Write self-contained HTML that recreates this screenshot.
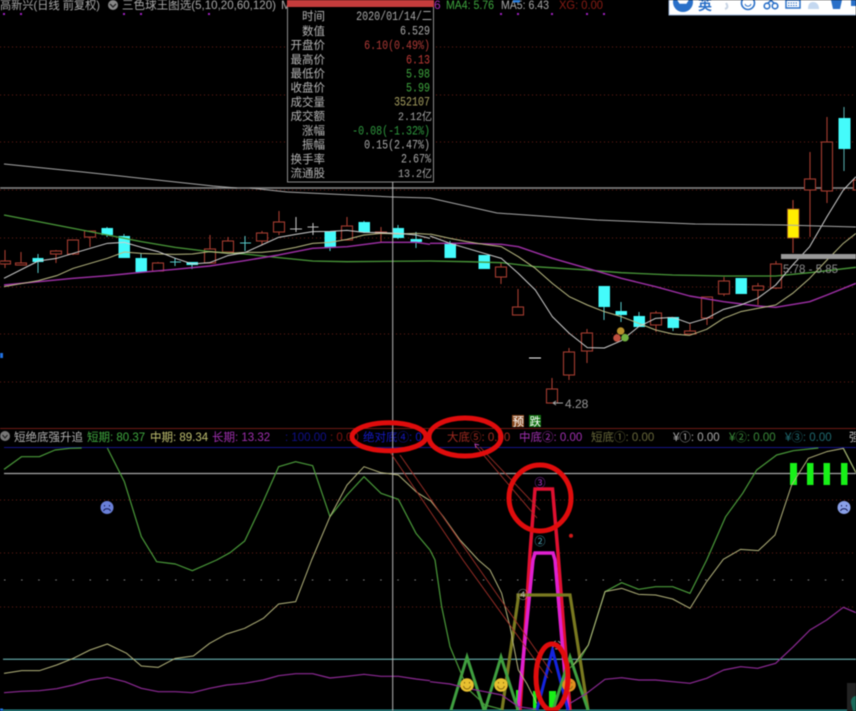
<!DOCTYPE html>
<html><head><meta charset="utf-8"><style>
html,body{margin:0;padding:0;background:#000;width:856px;height:711px;overflow:hidden}
svg{display:block;position:absolute;left:0;top:0;filter:blur(.4px)}
text{font-family:"Liberation Sans","WenQuanYi Zen Hei","Noto Sans CJK SC",sans-serif;font-size:12px}
.m{font-family:"Liberation Mono","WenQuanYi Zen Hei","Noto Sans CJK SC",monospace;font-size:10px;text-anchor:end}
.l{font-size:11.5px;text-anchor:end;fill:#b5b5b5}
.h{font-size:11.5px}
.z path,.z polyline{vector-effect:non-scaling-stroke;fill:none;stroke-linejoin:round}
</style></head><body>
<svg width="856" height="711" viewBox="0 0 856 711" xmlns="http://www.w3.org/2000/svg">
<rect width="856" height="711" fill="#000"/>
<!-- dotted grid -->
<g stroke="#6e2018" stroke-width="1" stroke-dasharray="1 3" fill="none">
<path d="M0 47H856M0 95H856M0 142H856M0 190H856M0 238H856M0 287H856M0 334H856M0 382H856M0 500H856M0 553H856M0 607H856"/>
</g>
<path d="M4 580H856" stroke="#888" stroke-dasharray="1.5 15.6"/>
<path d="M0 188H856" stroke="#8a8a8a" stroke-width="1.5"/>
<!-- purple dots -->
<g fill="#a020c0"><rect x="3" y="13" width="2" height="2"/><rect x="20" y="13" width="2" height="2"/><rect x="123" y="13" width="2" height="2"/><rect x="140" y="13" width="2" height="2"/><rect x="208" y="13" width="2" height="2"/><rect x="500" y="13" width="2" height="2"/><rect x="517" y="13" width="2" height="2"/><rect x="551" y="13" width="2" height="2"/><rect x="586" y="13" width="2" height="2"/><rect x="603" y="13" width="2" height="2"/></g>
<!-- red candles -->
<g stroke="#a53c30" stroke-width="1.1" fill="#000">
<path d="M5 250V268M21 252V265M56 250V263M73 240V255M90 237V247M158 262V271M210 235V263M228 237V252M262 231V245M279 211V235M347 217V240M381 227V242M501 263V284M518 289V315M552 378V403M569 348V380M587 329V363M656 311V332M690 324V334M707 297V325M724 277V296M758 283V305M776 261V289M810 152V237M827 117V203"/>
<rect x="0" y="261" width="10.5" height="3"/><rect x="15.500" y="263" width="11" height="2"/><rect x="50.500" y="251" width="11" height="3"/><rect x="67.500" y="240" width="11" height="14"/><rect x="84.500" y="231" width="11" height="6"/><rect x="152.500" y="263" width="11" height="8"/><rect x="204.500" y="249" width="11" height="14"/><rect x="222.500" y="241" width="11" height="11"/><rect x="256.500" y="233" width="11" height="8"/><rect x="273.500" y="222" width="11" height="10"/><rect x="341.500" y="226" width="11" height="14"/><rect x="375.500" y="232" width="11" height="1.500"/><rect x="495.500" y="267" width="11" height="10"/><rect x="512.500" y="307" width="11" height="8"/><rect x="546.500" y="389" width="11" height="14"/><rect x="563.500" y="352" width="11" height="23"/><rect x="581.500" y="333" width="11" height="18"/><rect x="650.500" y="313" width="11" height="12"/><rect x="684.500" y="331" width="11" height="3"/><rect x="701.500" y="297" width="11" height="21"/><rect x="718.500" y="281" width="11" height="13"/><rect x="752.500" y="286" width="11" height="4"/><rect x="770.500" y="264" width="11" height="24"/><rect x="804.500" y="179" width="11" height="11"/><rect x="821.500" y="142" width="11" height="49"/><rect x="853.500" y="180" width="6" height="10"/>
</g>
<!-- cyan candles -->
<g stroke="#58c8c8" stroke-width="1">
<path d="M38 254V273M107 227V237M124 234V258M141 253V258M175 258V266M192 262V269M245 236V251M330 231V251M364 221V233M398 225V239M416 232V248M450 241V258M604 307V320M621 302V322M639 312V327M673 328V331"/>
<path d="M170 262H181M240 243H251"/>
</g>
<g fill="#44fbfb">
<rect x="32.500" y="258" width="11" height="4"/><rect x="101.500" y="228" width="11.500" height="7"/><rect x="118.500" y="236" width="11.500" height="22"/><rect x="135.500" y="258" width="11.500" height="14"/><rect x="186.500" y="262" width="11.500" height="3"/><rect x="324.500" y="231" width="11.500" height="16"/><rect x="358.500" y="222" width="11.500" height="10"/><rect x="392.500" y="228" width="11.500" height="10"/><rect x="410.500" y="239" width="11.500" height="3"/><rect x="444.500" y="243" width="11.500" height="15"/><rect x="478.500" y="255" width="11.500" height="14"/><rect x="598.500" y="286" width="11.500" height="21"/><rect x="615.500" y="311" width="11.500" height="4"/><rect x="633.500" y="316" width="11.500" height="11"/><rect x="667.500" y="317" width="11.500" height="11"/><rect x="735.500" y="278" width="11.500" height="16"/><rect x="838.500" y="118" width="12" height="31"/></g>
<path d="M844 107V118M844 149V171" stroke="#58b0b0"/>
<!-- white cross -->
<path d="M296 217V232M290 229H302M313 223V235M307.500 227H318.500" stroke="#bbb" stroke-width="1.100"/>
<path d="M529 358H541" stroke="#fff" stroke-width="1"/>
<!-- yellow candle -->
<path d="M793 200V253" stroke="#a53c30" stroke-width="1.200"/>
<rect x="787.500" y="209" width="11.500" height="29" fill="#ffee00" stroke="#a05030" stroke-width=".8"/>
<!-- MA lines -->
<g class="z" transform="translate(0,190) scale(.33333)">
<path stroke="#4a9a3a" stroke-width="1.300" d="M12 75L115 95 220 115 322 135 424 155 526 172 629 185 734 192 836 203 938 213 1041 215 1290 213"/>
<path stroke="#a030a8" stroke-width="1.400" d="M12 285L115 275 220 265 322 257 424 247 526 238 629 228 734 212 836 195 938 175 1041 170 1143 157 1248 157 1290 163"/>
<path stroke="#bcbc84" stroke-width="1" d="M12 290L115 272 170 257 220 235 322 205 373 186 424 190 475 192 526 193 577 192 629 185 683 190 734 187 785 187 836 182 887 172 938 160 990 157 1041 148 1092 135 1143 130 1195 132 1248 130 1290 133"/>
<path stroke="#cfcfcf" stroke-width="1" d="M12 265L115 213 170 205 220 190 322 160 373 157 424 172 475 185 526 205 577 222 629 218 683 197 734 188 785 165 836 142 887 133 938 125 990 124 1041 121 1092 127 1143 128 1195 130 1248 135 1290 145"/>
</g>
<g class="z" transform="translate(430,190) scale(.33333)">
<path stroke="#4a9a3a" stroke-width="1.300" d="M0 213L111 215 214 218 316 230 472 240 574 248 728 255 881 258 1037 258 1139 248 1278 232"/>
<path stroke="#a030a8" stroke-width="1.400" d="M0 160L111 160 214 163 265 170 367 205 472 235 574 265 677 290 779 318 881 335 983 348 1037 352 1139 335 1191 315 1278 280"/>
<path stroke="#bcbc84" stroke-width="1" d="M0 132L60 145 111 155 162 163 214 170 265 200 316 235 367 280 418 320 472 345 523 365 574 380 626 400 677 420 728 432 779 436 830 418 881 385 932 365 983 355 1037 345 1088 310 1139 265 1191 210 1240 160 1278 130"/>
<path stroke="#cfcfcf" stroke-width="1" d="M0 138L60 160 111 175 162 190 214 205 265 250 316 300 367 380 418 430 472 473 523 474 574 452 626 410 677 385 728 382 779 400 830 385 881 358 932 345 983 325 1037 285 1088 225 1139 170 1191 80 1240 0 1278 -40"/>
</g>
<g fill="none" stroke="#a8a8a8" stroke-width="1">
<path d="M4 164L83 172 213 186 237 188M250 188L287 192 393 197 430 198 497 213 597 220 695 224 783 225 856 227"/>
</g>
<!-- marks -->
<rect x="781" y="254" width="75" height="5" fill="#999"/>
<text x="783" y="273" fill="#8c8c8c" style="font-size:11.500px">5.78 - 5.85</text>
<text x="565" y="408" fill="#999" style="font-size:12px">4.28</text>
<path d="M553 403H563M553 403l3-2M553 403l3 2" stroke="#aaa" fill="none"/>
<circle cx="620.700" cy="331" r="3.800" fill="#b8902c"/><circle cx="617" cy="338" r="3.800" fill="#c05040"/><circle cx="625" cy="337.700" r="3.800" fill="#70b040"/>
<rect x="0" y="353" width="3" height="5" fill="#2070e0"/>
<rect x="512" y="415" width="12" height="12" fill="#8a4a20"/><text x="512.500" y="425.500" fill="#fff" style="font-size:11.500px">预</text>
<rect x="529" y="415" width="12" height="12" fill="#107010"/><text x="529.500" y="425.500" fill="#fff" style="font-size:11.500px">跌</text>
<!-- top legend -->
<text x="0" y="9" fill="#a8a8a8" textLength="100" lengthAdjust="spacingAndGlyphs">高新兴(日线 前复权)</text>
<circle cx="113" cy="5" r="5" fill="#888"/><path d="M110 4l3 3 3-3" stroke="#222" fill="none" stroke-width="1.300"/>
<text x="122" y="9" fill="#a8a8a8" textLength="154" lengthAdjust="spacingAndGlyphs">三色球王图选(5,10,20,60,120)</text>
<text x="281" y="9" fill="#a8a8a8">M</text>
<text x="434" y="9" fill="#a030b0">6</text>
<text x="446" y="9" fill="#3fa83f" textLength="48" lengthAdjust="spacingAndGlyphs">MA4: 5.76</text>
<text x="501" y="9" fill="#aaa" textLength="48" lengthAdjust="spacingAndGlyphs">MA5: 6.43</text>
<text x="559" y="9" fill="#8a1c14" textLength="44" lengthAdjust="spacingAndGlyphs">XG: 0.00</text>
<rect x="513" y="0" width="7" height="2.500" fill="#2a80e0"/>
<!-- toolbar -->
<rect x="669" y="-2" width="190" height="17" fill="#fff" stroke="#9ab4d8"/>
<circle cx="683" cy="2" r="10" fill="#2a70c8"/><path d="M678 0l2 3h6l2-3" stroke="#fff" fill="#fff" stroke-width="1.500"/>
<text x="698" y="10" fill="#2a70c8" style="font-size:14px;font-weight:bold">英</text>
<path d="M726 3c2 3 2 5-1 6" stroke="#c8d4e4" fill="none" stroke-width="2"/>
<circle cx="748" cy="3" r="6.500" fill="none" stroke="#2a70c8" stroke-width="1.600"/><path d="M745 4c1 3 5 3 6 0" stroke="#2a70c8" fill="none"/>
<circle cx="767" cy="6" r="2.800" fill="none" stroke="#2a70c8" stroke-width="1.600"/><circle cx="775" cy="6" r="2.800" fill="none" stroke="#2a70c8" stroke-width="1.600"/><path d="M768 3l6-5M774 3l-6-5" stroke="#2a70c8" stroke-width="1.500"/>
<rect x="786" y="0" width="14" height="8" fill="none" stroke="#2a70c8" stroke-width="1.500"/><path d="M788 3h10M788 5.500h10" stroke="#2a70c8" stroke-dasharray="1.500 1"/>
<path d="M808 9c0-5 2-7 5-7s6 2 6 7z" fill="#c4d8f0"/>
<path d="M831 0h11l-2 9h-7z" fill="#2a70c8"/>
<rect x="851" y="0" width="5" height="6" fill="#2a70c8"/>
<!-- tooltip -->
<rect x="288" y="0" width="145" height="182" fill="#000"/>
<rect x="287.500" y="0" width="146" height="182" fill="none" stroke="#8c8c8c" stroke-width="1"/>
<rect x="287" y="0" width="147" height="7" fill="#c43c3c"/>
<text class="l" x="325" y="20">时间</text><text class="l" x="325" y="35">数值</text><text class="l" x="325" y="49">开盘价</text><text class="l" x="325" y="63.500">最高价</text><text class="l" x="325" y="77.500">最低价</text><text class="l" x="325" y="91.500">收盘价</text><text class="l" x="325" y="106">成交量</text><text class="l" x="325" y="120">成交额</text><text class="l" x="325" y="134.500">涨幅</text><text class="l" x="325" y="148.500">振幅</text><text class="l" x="325" y="163">换手率</text><text class="l" x="325" y="177">流通股</text>
<text class="m" transform="translate(432,20) scale(1,1.250)" fill="#aaa">2020/01/14/二</text>
<text class="m" transform="translate(430,34.500) scale(1,1.250)" fill="#aaa">6.529</text>
<text class="m" transform="translate(430,49) scale(1,1.250)" fill="#b03a36">6.10(0.49%)</text>
<text class="m" transform="translate(430,63.500) scale(1,1.250)" fill="#c03a36">6.13</text>
<text class="m" transform="translate(430,77.500) scale(1,1.250)" fill="#3fa83f">5.98</text>
<text class="m" transform="translate(430,91.500) scale(1,1.250)" fill="#3fa83f">5.99</text>
<text class="m" transform="translate(430,105.500) scale(1,1.250)" fill="#a8a060">352107</text>
<text class="m" transform="translate(432,120) scale(1,1.100)" fill="#aaa">2.12亿</text>
<text class="m" transform="translate(430,134.500) scale(1,1.250)" fill="#2f9a3f">-0.08(-1.32%)</text>
<text class="m" transform="translate(430,148.500) scale(1,1.250)" fill="#aaa">0.15(2.47%)</text>
<text class="m" transform="translate(431,162.500) scale(1,1.250)" fill="#aaa">2.67%</text>
<text class="m" transform="translate(432,177) scale(1,1.100)" fill="#aaa">13.2亿</text>
<!-- lower panel rules -->
<path d="M0 428.500H856" stroke="#6e1a14"/>
<path d="M4 447.500H856" stroke="#14148a"/>
<path d="M4 473.500H856" stroke="#a8a8a8" stroke-width="1.200"/>
<path d="M3 659.300H856" stroke="#78c8c8" stroke-width="1"/>
<path d="M0 710.300H856" stroke="#2a8a8a" stroke-width="1.500"/>
<rect x="0" y="708.500" width="3" height="3" fill="#2070e0"/>
<!-- header -->
<circle cx="5" cy="436" r="5" fill="#777"/><path d="M2.500 435l2.500 3 2.500-3" stroke="#222" fill="none" stroke-width="1.200"/>
<text class="h" x="14" y="441" fill="#b0b0b0">短绝底强升追</text>
<text class="h" x="87" y="441" fill="#3fa83f">短期: 80.37</text>
<text class="h" x="150" y="441" fill="#c0c070">中期: 89.34</text>
<text class="h" x="212" y="441" fill="#a030b0">长期: 13.32</text>
<text class="h" x="285" y="441" fill="#10108a">: 100.00</text>
<text class="h" x="330" y="441" fill="#801410">: 0.00</text>
<text class="h" x="363" y="441" fill="#1418c0">绝对底④: 0</text>
<text class="h" x="447" y="441" fill="#a02a20">大底⑤: 0.00</text>
<text class="h" x="519" y="441" fill="#a030b0">中底②: 0.00</text>
<text class="h" x="591" y="441" fill="#68683a">短底①: 0.00</text>
<text class="h" x="673" y="441" fill="#aaa">¥①: 0.00</text>
<text class="h" x="729" y="441" fill="#3a8a3a">¥②: 0.00</text>
<text class="h" x="785" y="441" fill="#1f6a70">¥③: 0.00</text>
<text class="h" x="849" y="441" fill="#bbb">强</text>
<!-- lower shapes -->
<g fill="#18f018"><rect x="516" y="690" width="3" height="20"/><rect x="533" y="691" width="3.500" height="19"/><rect x="549" y="691" width="7" height="19"/><rect x="790" y="463" width="7" height="22"/><rect x="807" y="463" width="6.500" height="22"/><rect x="823.500" y="463" width="6.500" height="22"/><rect x="841" y="463" width="6.500" height="22"/></g>
<g fill="none" stroke-linejoin="miter">
<path d="M520 710L530 553 535 489H552.500L558 553 570 710" stroke="#e01030" stroke-width="3.500"/>
<path d="M518 710L533 560 535 553H553L555 560 568 710" stroke="#e020d0" stroke-width="3.500"/>
<path d="M502 710L518 600 518 595H570L588 710" stroke="#7a7a20" stroke-width="3.200"/>
<path d="M537 710L552.500 650 568 710" stroke="#1424e0" stroke-width="3"/>
<path d="M451 710L467 657 484 710M485 710L501 657 518 710M553 710L570 657 588 710" stroke="#40a040" stroke-width="3"/>
</g>
<!-- lower oscillator lines -->
<g class="z" transform="translate(0,410) scale(.33333)">
<path stroke="#4a9a3a" stroke-width="1.200" d="M12 178L65 140 118 140 165 120 210 115 245 114M322 114L373 215 424 380 470 455 526 462 577 482 650 450 690 428 734 393 785 285 836 170 887 155 938 167 990 320 1041 255 1092 200 1143 250 1195 268 1248 370 1290 420"/>
<path stroke="#b4b47c" stroke-width="1" d="M12 790L65 782 118 782 170 765 220 745 270 720 322 702 380 730 424 768 475 772 526 745 580 738 629 700 680 672 734 655 790 625 836 582 887 575 935 450 990 320 1041 225 1092 170 1143 188 1195 195 1248 245 1290 272"/>
<path stroke="#8e2a96" stroke-width="1.200" d="M12 848L65 844 118 842 170 836 220 825 270 810 322 802 375 815 424 835 475 845 526 845 577 848 629 835 680 825 734 820 790 810 836 797 887 791 938 791 990 804 1041 799 1092 793 1143 799 1195 799 1248 807 1290 812"/>
</g>
<g class="z" transform="translate(430,560) scale(.33333)">
<path stroke="#4a9a3a" stroke-width="1.200" d="M0 -30L15 0 35 140 60 260 112 385 165 435 215 448M400 340L450 298 475 255 525 95 575 68 626 88 677 80 728 80 780 100 830 0 887 -130 938 -200 980 -270 1040 -315 1090 -328 1165 -336M1240 -335L1278 -262"/>
<path stroke="#b4b47c" stroke-width="1" d="M0 -180L40 -130 90 -60 145 0 180 30 215 100 240 200 265 330 290 370 320 430M430 315L475 255 525 95 575 85 626 103 677 105 728 117 780 145 830 65 880 -2 932 -32 985 -28 1035 -75 1085 -225 1135 -305 1190 -325 1240 -335 1278 -262"/>
<path stroke="#8e2a96" stroke-width="1.200" d="M0 365L60 372 112 385 165 395 215 405 265 440 320 448M420 430L470 400 525 358 575 353 626 360 677 360 728 365 780 370 830 355 881 330 932 320 983 325 1037 310 1090 260 1140 210 1190 180 1240 142 1278 158"/>
</g>
<!-- crosshair -->
<path d="M392.700 182V711" stroke="#b8b8b8" stroke-width="1"/>
<!-- thin pointers -->
<g stroke="#a03028" fill="none" stroke-width=".9">
<path d="M390 452L463 560 548 678M400 455L473 560 552 673M475 445L537 518M480 447L540 510"/>
</g>
<path d="M476 448l-1-4 4 1" stroke="#b040b0" fill="none"/>
<!-- glyph markers -->
<text x="534.500" y="486.500" fill="#a030c0" style="font-size:11px">③</text>
<text x="534.500" y="545" fill="#4aa0b0" style="font-size:11px">②</text>
<text x="517.500" y="598.500" fill="#b0b0b0" style="font-size:11px">④</text>
<circle cx="556.700" cy="645" r="4" fill="none" stroke="#999" stroke-width=".9" stroke-dasharray="3 2"/>
<circle cx="571" cy="535.700" r="2" fill="#d01818"/>
<!-- faces -->
<g>
<circle cx="467" cy="685" r="6.800" fill="#e8c030"/><circle cx="501" cy="685" r="6.800" fill="#e8c030"/><circle cx="569" cy="685" r="6.800" fill="#e09020"/>
<path d="M463.500 686c1 4 6 4 7 0M497.500 686c1 4 6 4 7 0M565.500 686c1 4 6 4 7 0" stroke="#8a6a10" fill="none"/>
<path d="M464.500 682v1.500M469.500 682v1.500M498.500 682v1.500M503.500 682v1.500M566.500 682v1.500M571.500 682v1.500" stroke="#8a6a10"/>
<circle cx="107" cy="507.500" r="6.500" fill="#6a80d8"/><circle cx="844" cy="507.500" r="6.500" fill="#8aa0e8"/>
<path d="M103.500 511c1-3 6-3 7 0M840.500 511c1-3 6-3 7 0" stroke="#141a50" fill="none"/>
<path d="M104.500 505v1.500M109.500 505v1.500M841.500 505v1.500M846.500 505v1.500" stroke="#141a50"/>
</g>
<!-- red annotation ellipses -->
<g fill="none" stroke="#e00c0c" stroke-width="5">
<ellipse cx="389" cy="436.700" rx="37" ry="14"/>
<ellipse cx="465" cy="437" rx="36" ry="19"/>
<ellipse cx="540" cy="498" rx="31" ry="33"/>
<ellipse cx="552" cy="677" rx="16" ry="33"/>
</g>
<rect x="847" y="683" width="9" height="28" fill="#222"/>
<path d="M856 696a5 6 0 0 0 -5 7l2 8h3z" fill="#1a6a5a"/>
</svg>
</body></html>
